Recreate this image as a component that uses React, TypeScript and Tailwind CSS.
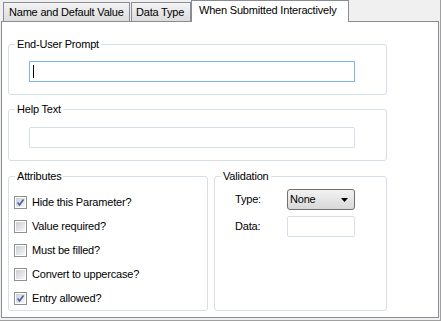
import React from 'react'

const font = { fontFamily: '"Liberation Sans", Arial, sans-serif' }

function CheckRow({ label, checked }: { label: string; checked?: boolean }) {
  return (
    <div className="flex items-center h-[13px] mb-[11px]">
      <div className="w-[13px] h-[13px] border border-[#8e8f8f] bg-white p-[1px]">
        <div className="w-full h-full bg-gradient-to-br from-[#cbcfd5] to-[#f6f6f6] flex items-center justify-center">
          {checked && (
            <svg width="9" height="9" viewBox="0 0 9 9">
              <path d="M1.5 4.5 L3.5 7 L7.5 1.5" fill="none" stroke="#4a5f97" strokeWidth="1.6" />
            </svg>
          )}
        </div>
      </div>
      <span className="ml-[5px] text-[11px] text-black leading-none">{label}</span>
    </div>
  )
}

export default function App() {
  return (
    <div className="w-[441px] h-[321px] bg-[#f0f0f0] relative overflow-hidden tracking-[-0.2px]" style={font}>
      <div className="w-[441px] h-[321px] border-r border-b border-[#a0a0a0] pl-[1px] pt-0 flex flex-col">
        {/* Tabs */}
        <div className="flex items-end h-[21px] pl-[2px]">
          <div className="w-[127px] h-[19px] pl-[5px] mr-[1px] border border-b-0 border-[#898c95] bg-gradient-to-b from-[#f3f3f3] to-[#dcdcdc] text-[11px] leading-[19px] text-black whitespace-nowrap">
            Name and Default Value
          </div>
          <div className="w-[60px] h-[19px] pl-[4px] border border-b-0 border-[#898c95] bg-gradient-to-b from-[#f3f3f3] to-[#dcdcdc] text-[11px] leading-[19px] text-black whitespace-nowrap">
            Data Type
          </div>
          <div className="w-[158px] h-[22px] -mb-[1px] pl-[7px] border border-b-0 border-[#898c95] bg-white text-[11px] leading-[19px] text-black relative z-10 whitespace-nowrap">
            When Submitted Interactively
          </div>
        </div>

        {/* Panel */}
        <div className="w-[438px] h-[297px] border border-[#898c95] bg-white px-[6px] pt-[15px]">
          <fieldset className="w-[379px] border border-[#d5dfe5] rounded-[3px] pb-[12px]">
            <legend className="ml-[6px] px-[2px] text-[11px] leading-[14px] text-black">End-User Prompt</legend>
            <div className="pl-[20px] pt-[10px]">
              <div className="w-[326px] h-[21px] border border-[#7eb4ea] bg-white flex items-center pl-[3px]">
                <div className="w-[1px] h-[13px] bg-black" />
              </div>
            </div>
          </fieldset>

          <fieldset className="w-[379px] mt-[7px] border border-[#d5dfe5] rounded-[3px] pb-[12px]">
            <legend className="ml-[6px] px-[2px] text-[11px] leading-[14px] text-black">Help Text</legend>
            <div className="pl-[20px] pt-[11px]">
              <div className="w-[326px] h-[21px] border border-[#d5dfe5] rounded-[2px] bg-white" />
            </div>
          </fieldset>

          <div className="flex mt-[8px] gap-[6px]">
            <fieldset className="w-[200px] h-[142px] border border-[#d5dfe5] rounded-[3px]">
              <legend className="ml-[6px] px-[2px] text-[11px] leading-[14px] text-black">Attributes</legend>
              <div className="pl-[5px] pt-[13px]">
                <CheckRow label="Hide this Parameter?" checked />
                <CheckRow label="Value required?" />
                <CheckRow label="Must be filled?" />
                <CheckRow label="Convert to uppercase?" />
                <CheckRow label="Entry allowed?" checked />
              </div>
            </fieldset>

            <fieldset className="w-[173px] h-[142px] border border-[#d5dfe5] rounded-[3px]">
              <legend className="ml-[6px] px-[2px] text-[11px] leading-[14px] text-black">Validation</legend>
              <div className="pt-[6px] pl-[20px] flex flex-col gap-[6px]">
                <div className="flex items-center">
                  <span className="w-[52px] text-[11px] text-black">Type:</span>
                  <div className="w-[68px] h-[21px] border border-[#707070] rounded-[3px] bg-gradient-to-b from-[#f2f2f2] to-[#d8d8d8] flex items-center justify-between pl-[2px] pr-[5px]">
                    <span className="text-[11px] leading-none text-black">None</span>
                    <svg width="8" height="4" viewBox="0 0 8 4">
                      <path d="M0 0 H7 L3.5 4 Z" fill="#000" />
                    </svg>
                  </div>
                </div>
                <div className="flex items-center">
                  <span className="w-[52px] text-[11px] text-black">Data:</span>
                  <div className="w-[68px] h-[21px] border border-[#d5dfe5] rounded-[2px] bg-white" />
                </div>
              </div>
            </fieldset>
          </div>
        </div>
      </div>
    </div>
  )
}
